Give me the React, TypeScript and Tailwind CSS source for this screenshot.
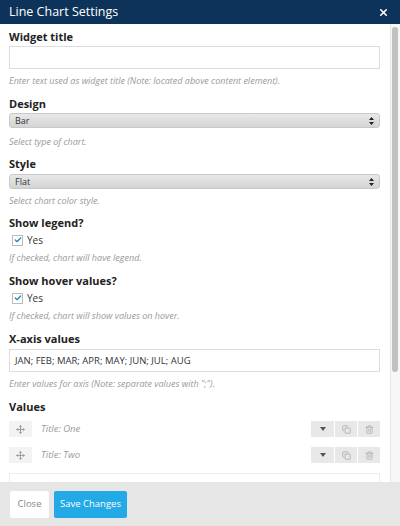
import { Move, Copy, Trash2, Check, X } from "lucide-react";

const font = { fontFamily: '"Open Sans", "Liberation Sans", sans-serif' };

function Label({ children, className = "" }: { children: React.ReactNode; className?: string }) {
  return <div className={`h-[14px] text-[11px] font-bold leading-[14px] text-[#222] ${className}`}>{children}</div>;
}

function Help({ children, className = "" }: { children: React.ReactNode; className?: string }) {
  return <div className={`h-[12px] text-[9px] italic leading-[12px] text-[#999] ${className}`}>{children}</div>;
}

function Select({ value, className = "" }: { value: string; className?: string }) {
  return (
    <div className={`flex h-[15px] items-center justify-between rounded-[3px] border border-[#c8c8c8] bg-gradient-to-b from-[#e8e8e8] to-[#d4d4d4] px-[5px] text-[9px] leading-[13px] text-[#333] ${className}`}>
      <span>{value}</span>
      <svg width="5" height="8" viewBox="0 0 5 8">
        <path d="M2.5 0L5 3H0Z M2.5 8L5 5H0Z" fill="#222" />
      </svg>
    </div>
  );
}

function Checkbox({ className = "" }: { className?: string }) {
  return (
    <div className={`flex h-[12px] items-center gap-[4px] pl-[3px] ${className}`}>
      <span className="flex h-[11px] w-[11px] items-center justify-center border border-[#bbb] bg-white">
        <Check className="h-[8px] w-[8px] text-[#1e8cbe]" strokeWidth={4} />
      </span>
      <span className="text-[10px] leading-[12px] text-[#333]">Yes</span>
    </div>
  );
}

function ValueRow({ title }: { title: string }) {
  return (
    <div className="flex h-[16px] items-center">
      <span className="flex h-[16px] w-[23px] items-center justify-center bg-[#f3f3f3]">
        <Move className="h-[9px] w-[9px] text-[#888]" />
      </span>
      <span className="ml-[9px] flex-1 text-[9.5px] italic leading-[16px] text-[#999]">{title}</span>
      <div className="flex gap-[1px]">
        <span className="flex h-[16px] w-[23px] items-center justify-center bg-[#e8e8e8]">
          <svg width="6" height="4" viewBox="0 0 6 4"><path d="M0 0H6L3 4Z" fill="#555" /></svg>
        </span>
        <span className="flex h-[16px] w-[22px] items-center justify-center bg-[#e8e8e8]">
          <Copy className="h-[9px] w-[9px] text-[#aaa]" />
        </span>
        <span className="flex h-[16px] w-[22px] items-center justify-center bg-[#e8e8e8]">
          <Trash2 className="h-[9px] w-[9px] text-[#aaa]" />
        </span>
      </div>
    </div>
  );
}

export default function App() {
  return (
    <div className="flex h-[526px] w-[400px] flex-col overflow-hidden bg-white" style={font}>
      <div className="flex h-[24px] shrink-0 items-center justify-between bg-[#0e335a] pl-[9px] pr-[11px] text-white">
        <span className="text-[12.5px] leading-[24px]">Line Chart Settings</span>
        <X className="h-[11px] w-[11px]" strokeWidth={3.5} />
      </div>
      <div className="flex min-h-0 flex-1">
        <div className="flex-1 overflow-hidden pl-[9px] pr-[10px] pt-[6px]">
          <Label>Widget title</Label>
          <div className="mt-[2px] h-[23px] border border-[#ddd] bg-white" />
          <Help className="mt-[6px]">Enter text used as widget title (Note: located above content element).</Help>

          <Label className="mt-[10px]">Design</Label>
          <Select value="Bar" className="mt-[2px]" />
          <Help className="mt-[8px]">Select type of chart.</Help>

          <Label className="mt-[9px]">Style</Label>
          <Select value="Flat" className="mt-[3px]" />
          <Help className="mt-[6px]">Select chart color style.</Help>

          <Label className="mt-[9px]">Show legend?</Label>
          <Checkbox className="mt-[4px]" />
          <Help className="mt-[6px]">If checked, chart will have legend.</Help>

          <Label className="mt-[10px]">Show hover values?</Label>
          <Checkbox className="mt-[4px]" />
          <Help className="mt-[6px]">If checked, chart will show values on hover.</Help>

          <Label className="mt-[10px]">X-axis values</Label>
          <div className="mt-[3px] flex h-[23px] items-center border border-[#ddd] px-[5px] text-[9.5px] leading-[21px] text-[#333]">
            JAN; FEB; MAR; APR; MAY; JUN; JUL; AUG
          </div>
          <Help className="mt-[6px]">Enter values for axis (Note: separate values with ";").</Help>

          <Label className="mt-[10px]">Values</Label>
          <div className="mt-[7px] flex flex-col gap-[10px]">
            <ValueRow title="Title: One" />
            <ValueRow title="Title: Two" />
          </div>
          <div className="mt-[10px] h-[20px] border border-[#eee]" />
        </div>
        <div className="flex w-[10px] shrink-0 flex-col border-l border-[#e5e5e5] bg-[#f7f7f7] pt-[3px] pl-[1px] pr-[2px]">
          <div className="h-[345px] rounded-full bg-[#c1c1c1]" />
        </div>
      </div>
      <div className="flex h-[44px] shrink-0 items-center gap-[5px] bg-[#e6e6e6] pl-[10px]">
        <button className="h-[27px] w-[39px] rounded-[2px] bg-white text-[9.5px] text-[#888]">Close</button>
        <button className="h-[27px] w-[73px] rounded-[2px] bg-[#22a9e6] text-[9.5px] text-white">Save Changes</button>
      </div>
    </div>
  );
}
